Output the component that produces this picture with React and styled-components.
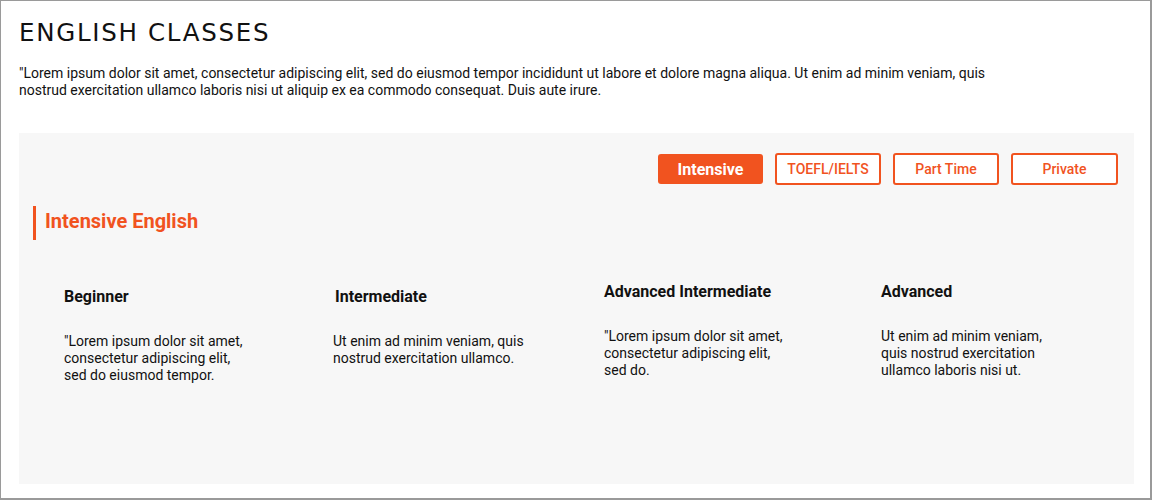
import React from "react";
import styled, { createGlobalStyle } from "styled-components";

const ORANGE = "#f1531f";

const Global = createGlobalStyle`
  html, body { margin: 0; padding: 0; background: #fff; }
  * { box-sizing: border-box; }
`;

const Frame = styled.div`
  width: 1152px;
  height: 500px;
  border: 1px solid #9a9a9a;
  border-right-width: 2px;
  border-bottom-width: 2px;
  padding: 16px 16px 0 18px;
  font-family: Roboto, "Liberation Sans", sans-serif;
  color: #111;
  overflow: hidden;
`;

const Title = styled.h1`
  margin: 0;
  font-family: "DejaVu Sans", sans-serif;
  font-weight: 400;
  font-size: 24.5px;
  line-height: 32px;
  letter-spacing: 1.7px;
  color: #111;
`;

const Intro = styled.p`
  margin: 16px 0 0;
  max-width: 990px;
  font-size: 14px;
  line-height: 17px;
  color: #111;
`;

const Panel = styled.section`
  margin-top: 34px;
  width: 1115px;
  height: 351px;
  background: #f7f7f7;
  padding: 20px 16px 0 14px;
`;

const Tabs = styled.div`
  display: flex;
  justify-content: flex-end;
  align-items: center;
  gap: 12px;
`;

const Tab = styled.button`
  width: ${(p) => p.$w}px;
  height: ${(p) => (p.$active ? 30 : 32)}px;
  border-radius: 3px;
  border: ${(p) => (p.$active ? "none" : `2px solid ${ORANGE}`)};
  background: ${(p) => (p.$active ? ORANGE : "#fff")};
  color: ${(p) => (p.$active ? "#fff" : ORANGE)};
  font-family: Roboto, sans-serif;
  font-weight: ${(p) => (p.$active ? 700 : 500)};
  font-size: ${(p) => (p.$active ? 16 : 14)}px;
  padding: 0;
  cursor: pointer;
`;

const SectionTitle = styled.h2`
  margin: 21px 0 0;
  border-left: 3px solid ${ORANGE};
  padding: 0 0 4px 9px;
  height: 34px;
  display: flex;
  align-items: center;
  font-size: 20px;
  font-weight: 700;
  color: ${ORANGE};
`;

const Levels = styled.div`
  display: flex;
  margin-top: 47px;
  padding-left: 31px;
`;

const Level = styled.div`
  width: ${(p) => p.$w}px;
  margin-top: ${(p) => p.$shift}px;
  flex: none;
`;

const LevelName = styled.h3`
  margin: 0;
  font-size: 16px;
  line-height: 20px;
  font-weight: 700;
  color: #111;
`;

const LevelText = styled.p`
  margin: 26px 0 0 ${(p) => p.$indent}px;
  max-width: ${(p) => p.$max}px;
  font-size: 14px;
  line-height: 17px;
  color: #111;
`;

const tabs = [
  { label: "Intensive", w: 105, active: true },
  { label: "TOEFL/IELTS", w: 106 },
  { label: "Part Time", w: 106 },
  { label: "Private", w: 107 },
];

const levels = [
  { name: "Beginner", w: 271, shift: 0, indent: 0, max: 186, text: "\"Lorem ipsum dolor sit amet, consectetur adipiscing elit, sed do eiusmod tempor." },
  { name: "Intermediate", w: 269, shift: 0, indent: -2, max: 205, text: "Ut enim ad minim veniam, quis nostrud exercitation ullamco." },
  { name: "Advanced Intermediate", w: 277, shift: -5, indent: 0, max: 186, text: "\"Lorem ipsum dolor sit amet, consectetur adipiscing elit, sed do." },
  { name: "Advanced", w: 240, shift: -5, indent: 0, max: 176, text: "Ut enim ad minim veniam, quis nostrud exercitation ullamco laboris nisi ut." },
];

export default function App() {
  return (
    <>
      <Global />
      <Frame>
        <Title>ENGLISH CLASSES</Title>
        <Intro>
          "Lorem ipsum dolor sit amet, consectetur adipiscing elit, sed do eiusmod tempor incididunt ut labore et dolore magna aliqua. Ut enim ad minim veniam, quis nostrud exercitation ullamco laboris nisi ut aliquip ex ea commodo consequat. Duis aute irure.
        </Intro>
        <Panel>
          <Tabs>
            {tabs.map((t) => (
              <Tab key={t.label} $w={t.w} $active={t.active}>
                {t.label}
              </Tab>
            ))}
          </Tabs>
          <SectionTitle>Intensive English</SectionTitle>
          <Levels>
            {levels.map((l) => (
              <Level key={l.name} $w={l.w} $shift={l.shift}>
                <LevelName>{l.name}</LevelName>
                <LevelText $max={l.max} $indent={l.indent}>{l.text}</LevelText>
              </Level>
            ))}
          </Levels>
        </Panel>
      </Frame>
    </>
  );
}
